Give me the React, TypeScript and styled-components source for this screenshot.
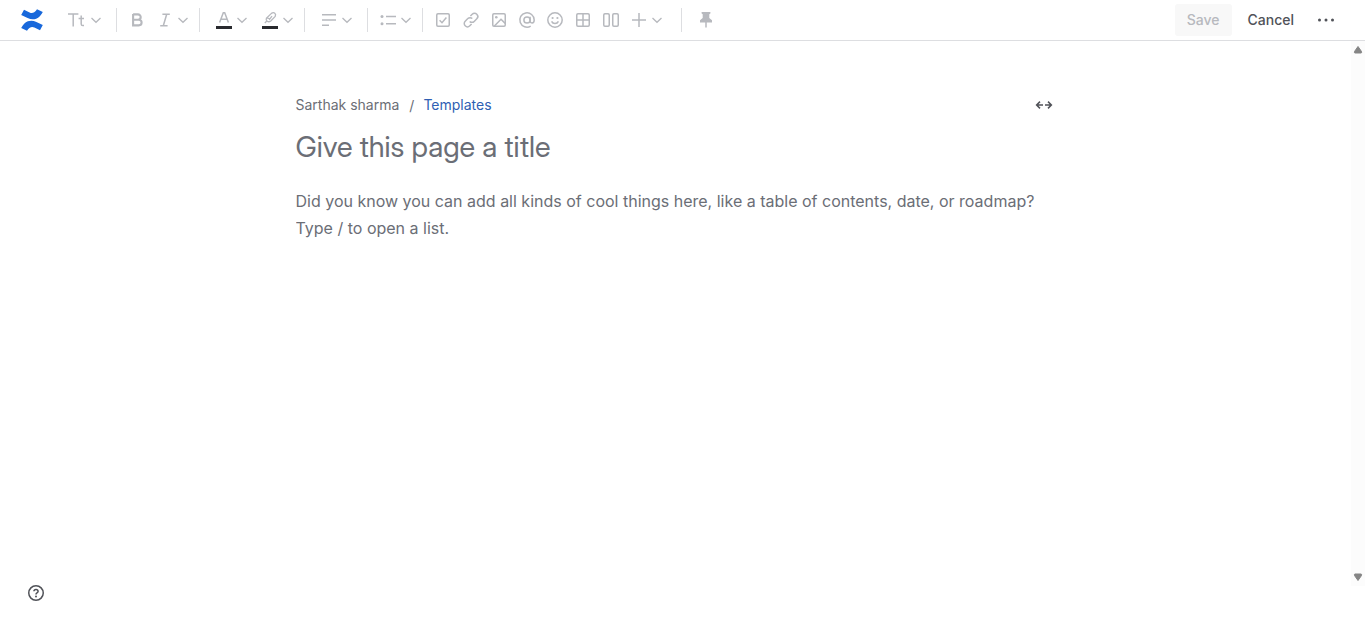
import React from 'react';
import styled, { createGlobalStyle } from 'styled-components';

const GlobalStyle = createGlobalStyle`
  *, *::before, *::after { box-sizing: border-box; }
  body {
    margin: 0;
    background: #ffffff;
    color: #505258;
    font-family: Inter, "Liberation Sans", sans-serif;
    font-size: 14px;
    line-height: 20px;
  }
  button, input, textarea { font: inherit; }
`;

const Page = styled.div`
  display: flex;
  flex-direction: column;
  min-height: 100vh;
  padding-bottom: 45px;
`;

const Header = styled.header`
  display: flex;
  align-items: center;
  justify-content: space-between;
  height: 41px;
  padding: 0 23px 0 20px;
  border-bottom: 1px solid #dddee1;
`;

const Toolbar = styled.div`
  display: flex;
  align-items: center;
`;

const LogoLink = styled.a`
  display: flex;
  width: 24px;
  height: 24px;
  margin-right: 20px;
`;

const ToolButton = styled.button`
  display: flex;
  align-items: center;
  gap: 2px;
  height: 32px;
  padding: 0 6px;
  border: 0;
  background: transparent;
  color: #b7b9be;
`;

const Separator = styled.span<{ $before: number; $after: number }>`
  width: 1px;
  height: 24px;
  margin: 0 ${p => p.$after}px 0 ${p => p.$before}px;
  background: #dddee1;
`;

const Actions = styled.div`
  display: flex;
  align-items: center;
  gap: 4px;
`;

const ActionButton = styled.button<{ $muted?: boolean }>`
  height: 32px;
  padding: 0 12px;
  border: 0;
  border-radius: 3px;
  background: ${p => (p.$muted ? '#f8f8f8' : 'transparent')};
  color: ${p => (p.$muted ? '#b7b9be' : '#505258')};
  font-weight: 500;
`;

const IconButton = styled.button<{ $size: number }>`
  display: flex;
  align-items: center;
  justify-content: center;
  width: ${p => p.$size}px;
  height: ${p => p.$size}px;
  padding: 0;
  border: 0;
  background: transparent;
  color: #505258;
`;

const Workspace = styled.div`
  display: flex;
  flex: 1;
`;

const Main = styled.main`
  display: flex;
  flex: 1;
  justify-content: center;
  padding-top: 52px;
`;

const Document = styled.div`
  display: flex;
  flex-direction: column;
  width: 100%;
  max-width: 760px;
`;

const TopRow = styled.div`
  display: flex;
  align-items: center;
  justify-content: space-between;
  height: 24px;
`;

const Crumbs = styled.nav`
  display: flex;
  align-items: center;
`;

const Crumb = styled.a<{ $current?: boolean }>`
  color: ${p => (p.$current ? '#2f5fb3' : '#6b6e76')};
  text-decoration: none;
`;

const Slash = styled.span`
  padding: 2px 9px 0 10px;
  color: #6b6e76;
`;

const TitleInput = styled.input`
  height: 36px;
  margin: 12px 0 0;
  padding: 0;
  border: 0;
  outline: 0;
  background: transparent;
  color: #292a2e;
  font-family: "Inter Display", Inter, "Liberation Sans", sans-serif;
  font-size: 29px;
  line-height: 36px;
  &::placeholder { color: #6b6e76; opacity: 1; }
`;

const BodyInput = styled.textarea`
  display: block;
  width: 100%;
  height: 108px;
  margin: 23px 0 0;
  padding: 0;
  border: 0;
  outline: 0;
  resize: none;
  background: transparent;
  color: #292a2e;
  font-size: 16px;
  font-variation-settings: "opsz" 16;
  line-height: 27px;
  &::placeholder { color: #6b6e76; opacity: 1; }
`;

const ScrollTrack = styled.div`
  display: flex;
  flex-direction: column;
  align-items: center;
  justify-content: space-between;
  width: 14px;
  padding: 4px 0;
  background: #fcfcfc;
`;

const HelpSlot = styled.div`
  position: fixed;
  left: 24px;
  bottom: 26px;
`;

const Svg = ({ children, size = 16 }: { children: React.ReactNode; size?: number }) => (
  <svg
    width={size}
    height={size}
    viewBox="0 0 16 16"
    fill="none"
    stroke="currentColor"
    strokeWidth="1.5"
    overflow="visible"
    aria-hidden="true"
  >
    {children}
  </svg>
);

const icons = {
  text: <path d="M-2 1.9H8.4M3.2 1.9V14.4M11.2 3.6V12Q11.2 13.6 12.8 13.6H14M8.6 6.4H14" />,
  bold: <path strokeWidth="2.1" d="M4.1 2.4H9A2.7 2.7 0 0 1 9 7.8H4.1M4.1 7.8H9.8A2.8 2.8 0 0 1 9.8 13.4H4.1ZM4.1 2V14" />,
  italic: <path d="M5.4 2.25H12.8M3.2 13.75H10.6M9.7 2.25L6.3 13.75" />,
  color: (
    <>
      <path d="M3.6 10.6L7.3 .8H8.7L12.4 10.6M5 7.2H11" />
      <path d="M0 15.5H16" stroke="#292a2e" strokeWidth="3" />
    </>
  ),
  highlight: (
    <>
      <path strokeWidth="1.3" d="M4.4 6.2L9.4 1.4Q11.4 0 12.8 1.2T13.2 4.4L8.8 9Q6.8 10.4 5.2 9.2T4.4 6.2ZM4.8 9L2.8 11M4.8 6.2Q6.8 5.6 7.6 7.2L10 4.2" />
      <path d="M0 15.5H16" stroke="#292a2e" strokeWidth="3" />
    </>
  ),
  align: <path d="M1 2.75H15M1 8H15M1 13.25H8" />,
  list: (
    <>
      <path d="M6 4.5H16M6 11.75H16" />
      <circle cx="2" cy="4.5" r="1.5" fill="currentColor" stroke="none" />
      <circle cx="2" cy="11.75" r="1.5" fill="currentColor" stroke="none" />
    </>
  ),
  task: (
    <>
      <rect x="1.75" y="1.75" width="12.5" height="12.5" rx="1.2" />
      <path d="M4.6 8.3L7 10.7L11.4 5.5" />
    </>
  ),
  link: (
    <>
      <path d="M7.4 4L9.2 2.2A3.2 3.2 0 0 1 13.8 6.8L11.2 9.4A3.1 3.1 0 0 1 6.7 9.4" />
      <path d="M8.6 12L6.8 13.8A3.2 3.2 0 0 1 2.2 9.2L4.8 6.6A3.1 3.1 0 0 1 9.3 6.6" />
    </>
  ),
  image: (
    <>
      <rect x="1.75" y="1.75" width="12.5" height="12.5" rx="1.2" />
      <path d="M3.4 14L10 7.2L14.2 11.4" />
      <circle cx="5.3" cy="5.3" r="1.3" fill="currentColor" stroke="none" />
    </>
  ),
  mention: (
    <>
      <circle cx="8" cy="8" r="3.1" />
      <path d="M11.1 4.8V9.1Q11.3 11.1 13 11.1Q15.2 10.8 15.2 8A7.2 7.2 0 1 0 11.7 14.2" />
    </>
  ),
  emoji: (
    <>
      <circle cx="8" cy="8" r="7.2" />
      <path d="M4.6 9.4Q5.6 11.6 8 11.6T11.4 9.4" />
      <circle cx="5.6" cy="6" r="1.1" fill="currentColor" stroke="none" />
      <circle cx="10.4" cy="6" r="1.1" fill="currentColor" stroke="none" />
    </>
  ),
  table: (
    <>
      <rect x="1.75" y="1.75" width="12.5" height="12.5" rx="1.2" />
      <path d="M8 2V14M2 8H14" />
    </>
  ),
  columns: (
    <>
      <rect x=".75" y="1.75" width="5.5" height="12.5" rx="1.2" />
      <rect x="9.75" y="1.75" width="5.5" height="12.5" rx="1.2" />
    </>
  ),
  plus: <path d="M8 1V15M1 8H15" />,
  pin: (
    <>
      <path d="M3.6 0H12.4V1.4L11.3 2.2V6L14 8.3V10.4H2V8.3L4.7 6V2.2L3.6 1.4Z" fill="currentColor" stroke="none" />
      <path d="M8 10V15.5" />
    </>
  ),
};

type IconName = keyof typeof icons;
type Tool = { icon: IconName; label: string; menu?: boolean };
type Divider = { before: number; after: number };

const tools: (Tool | Divider)[] = [
  { icon: 'text', label: 'Text styles', menu: true },
  { before: 6, after: 6 },
  { icon: 'bold', label: 'Bold' },
  { icon: 'italic', label: 'Italic and more formatting', menu: true },
  { before: 2, after: 10 },
  { icon: 'color', label: 'Text color', menu: true },
  { icon: 'highlight', label: 'Highlight color', menu: true },
  { before: 2, after: 10 },
  { icon: 'align', label: 'Alignment', menu: true },
  { before: 6, after: 6 },
  { icon: 'list', label: 'Lists', menu: true },
  { before: 2, after: 6 },
  { icon: 'task', label: 'Action item' },
  { icon: 'link', label: 'Link' },
  { icon: 'image', label: 'Add image' },
  { icon: 'mention', label: 'Mention' },
  { icon: 'emoji', label: 'Emoji' },
  { icon: 'table', label: 'Table' },
  { icon: 'columns', label: 'Layouts' },
  { icon: 'plus', label: 'Insert elements', menu: true },
  { before: 10, after: 10 },
  { icon: 'pin', label: 'Pin the toolbar' },
];

const Logo = () => (
  <svg width="24" height="24" viewBox="0 0 24 24" fill="#1868db" aria-hidden="true">
    <path d="M4 1.8L9.6 4.5Q12 5.7 14.2 4.3Q15.8 3.2 17 1.2L22.8 4Q20.2 9 16.2 10.7Q12.2 12.3 7.6 10.1L1.2 7.1Z" />
    <path d="M20 22.2L14.4 19.5Q12 18.3 9.8 19.7Q8.2 20.8 7 22.8L1.2 20Q3.8 15 7.8 13.3Q11.8 11.7 16.4 13.9L22.8 16.9Z" />
  </svg>
);

export default function App() {
  return (
    <>
      <GlobalStyle />
      <Page>
        <Header>
          <Toolbar role="toolbar" aria-label="Editor toolbar">
            <LogoLink href="#" aria-label="Confluence home"><Logo /></LogoLink>
            {tools.map((item, i) =>
              'icon' in item ? (
                <ToolButton key={i} type="button" aria-label={item.label}>
                  <Svg>{icons[item.icon]}</Svg>
                  {item.menu && <Svg><path strokeWidth="1.3" d="M3.5 6L8 10.3L12.5 6" /></Svg>}
                </ToolButton>
              ) : (
                <Separator key={i} $before={item.before} $after={item.after} />
              ),
            )}
          </Toolbar>
          <Actions>
            <ActionButton type="button" $muted disabled>Save</ActionButton>
            <ActionButton type="button">Cancel</ActionButton>
            <IconButton type="button" $size={32} aria-label="More actions">
              <Svg>
                <g fill="currentColor" stroke="none">
                  <circle cx="1.5" cy="8" r="1.5" />
                  <circle cx="8" cy="8" r="1.5" />
                  <circle cx="14.5" cy="8" r="1.5" />
                </g>
              </Svg>
            </IconButton>
          </Actions>
        </Header>
        <Workspace>
          <Main>
            <Document>
              <TopRow>
                <Crumbs aria-label="Breadcrumbs">
                  <Crumb href="#">Sarthak sharma</Crumb>
                  <Slash>/</Slash>
                  <Crumb href="#" $current>Templates</Crumb>
                </Crumbs>
                <IconButton type="button" $size={24} aria-label="Make page full-width">
                  <Svg>
                    <path d="M7 8H.8M4 4.6L.6 8L4 11.4M9 8H15.2M12 4.6L15.4 8L12 11.4" />
                  </Svg>
                </IconButton>
              </TopRow>
              <TitleInput aria-label="Page title" placeholder="Give this page a title" />
              <BodyInput
                aria-label="Page content"
                placeholder="Did you know you can add all kinds of cool things here, like a table of contents, date, or roadmap? Type / to open a list."
              />
            </Document>
          </Main>
          <ScrollTrack aria-hidden="true">
            <svg width="10" height="9" viewBox="0 0 10 9"><path d="M5 1.5L8.5 6.5Q9 8 8 8H2Q1 8 1.5 6.5Z" fill="#858585" stroke="#858585" /></svg>
            <svg width="10" height="9" viewBox="0 0 10 9"><path d="M5 7.5L8.5 2.5Q9 1 8 1H2Q1 1 1.5 2.5Z" fill="#858585" stroke="#858585" /></svg>
          </ScrollTrack>
        </Workspace>
        <HelpSlot>
          <IconButton type="button" $size={24} aria-label="Help">
            <Svg>
              <circle cx="8" cy="8" r="7.25" />
              <path d="M5.9 6.2Q6 4.4 8 4.4T10.1 6.2Q10.1 7.2 9 7.8T8 9.5" />
              <circle cx="8" cy="11.5" r="1" fill="currentColor" stroke="none" />
            </Svg>
          </IconButton>
        </HelpSlot>
      </Page>
    </>
  );
}
